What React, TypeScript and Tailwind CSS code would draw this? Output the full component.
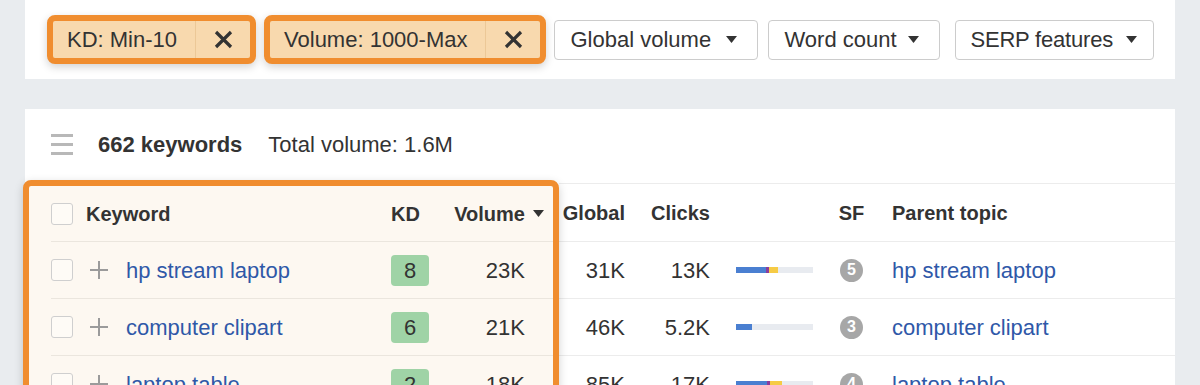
type Row = {
  keyword: string
  kd: number
  volume: string
  global: string
  clicks: string
  bar: [number, number, number]
  sf: number
  parent: string
}

const rows: Row[] = [
  { keyword: 'hp stream laptop', kd: 8, volume: '23K', global: '31K', clicks: '13K', bar: [30, 3, 9], sf: 5, parent: 'hp stream laptop' },
  { keyword: 'computer clipart', kd: 6, volume: '21K', global: '46K', clicks: '5.2K', bar: [16, 0, 0], sf: 3, parent: 'computer clipart' },
  { keyword: 'laptop table', kd: 2, volume: '18K', global: '85K', clicks: '17K', bar: [31, 3, 12], sf: 4, parent: 'laptop table' },
]

function Caret() {
  return (
    <svg width="11" height="7" viewBox="0 0 11 7" className="shrink-0">
      <polygon points="0,0 11,0 5.5,7" fill="#333" />
    </svg>
  )
}

function CloseIcon() {
  return (
    <svg width="19" height="19" viewBox="0 0 19 19">
      <path d="M2 2 L17 17 M17 2 L2 17" stroke="#333" strokeWidth="3.2" strokeLinecap="butt" />
    </svg>
  )
}

function PlusIcon() {
  return (
    <svg width="18" height="18" viewBox="0 0 18 18">
      <path d="M9 0 V18 M0 9 H18" stroke="#9b9b9b" strokeWidth="2" />
    </svg>
  )
}

function Checkbox() {
  return <div className="h-[22px] w-[22px] shrink-0 rounded-[3px] border border-[#cfcfcf] bg-white/40" />
}

function FilterChip({ label }: { label: string }) {
  return (
    <div className="flex h-[49px] items-stretch rounded-[8px] border-[6px] border-[#f08d2f] bg-[#f8d9ae] shadow-[0_3px_8px_rgba(0,0,0,0.18)]">
      <div className="flex items-center pl-[14px] pr-[18px] text-[22px]">{label}</div>
      <div className="flex w-[55px] items-center justify-center border-l border-[#ecc897]">
        <CloseIcon />
      </div>
    </div>
  )
}

function Dropdown({ label, className }: { label: string; className: string }) {
  return (
    <div className={`flex h-[40px] items-center justify-between rounded-[4px] border border-[#cccccc] bg-white text-[22px] ${className}`}>
      <span className="whitespace-nowrap">{label}</span>
      <Caret />
    </div>
  )
}

export default function App() {
  return (
    <div className="h-[385px] overflow-hidden bg-[#e9ecef] font-['Liberation_Sans',Arial,sans-serif] text-[#333]">
      <div className="ml-[25px] flex h-[79px] w-[1150px] items-center bg-white pl-[22px]">
        <FilterChip label="KD: Min-10" />
        <div className="ml-[8px]">
          <FilterChip label="Volume: 1000-Max" />
        </div>
        <div className="ml-[8px] flex gap-[10px]">
          <Dropdown label="Global volume" className="w-[204px] pl-[15px] pr-[20px]" />
          <Dropdown label="Word count" className="w-[172px] pl-[15px] pr-[20px]" />
          <div className="ml-[5px]">
            <Dropdown label="SERP features" className="w-[199px] pl-[14px] pr-[16px] tracking-[-0.2px]" />
          </div>
        </div>
      </div>

      <div className="ml-[25px] mt-[30px] w-[1150px] bg-white">
        <div className="flex h-[71px] items-center pl-[26px] text-[22px]">
          <div className="flex w-[22px] flex-col gap-[6px]">
            <div className="h-[3px] bg-[#b8b8b8]" />
            <div className="h-[3px] bg-[#b8b8b8]" />
            <div className="h-[3px] bg-[#b8b8b8]" />
          </div>
          <span className="ml-[25px] font-bold">662 keywords</span>
          <span className="ml-[26px]">Total volume: 1.6M</span>
        </div>

        <div className="flex">
          <div className="relative z-10 -ml-[2px] w-[536px] shrink-0 rounded-[8px] border-[6px] border-[#f08d2f] bg-[#fdf8f1] shadow-[0_3px_10px_rgba(0,0,0,0.18)]">
            <div className="flex h-[55px] items-center pl-[22px] text-[20px] font-bold">
              <Checkbox />
              <span className="ml-[13px] flex-1">Keyword</span>
              <span className="w-[62px]">KD</span>
              <div className="flex w-[91px] items-center">
                <span className="w-[72px] text-right">Volume</span>
                <span className="ml-[8px]">
                  <Caret />
                </span>
              </div>
              <div className="w-[9px]" />
            </div>
            {rows.map((r) => (
              <div key={r.keyword} className="ml-[22px] flex h-[57px] items-center border-t border-[#ebe6de] text-[22px]">
                <Checkbox />
                <span className="ml-[17px] flex">
                  <PlusIcon />
                </span>
                <span className="ml-[18px] flex-1 text-[#2f58a8]">{r.keyword}</span>
                <div className="w-[62px]">
                  <div className="flex h-[31px] w-[38px] items-center justify-center rounded-[4px] bg-[#9fd3a6]">{r.kd}</div>
                </div>
                <span className="w-[72px] text-right">{r.volume}</span>
                <div className="w-[28px]" />
              </div>
            ))}
          </div>

          <div className="mt-[3px] flex-1">
            <div className="flex h-[58px] items-center border-t border-[#ececec] text-[20px] font-bold">
              <span className="w-[66px] text-right">Global</span>
              <span className="w-[85px] text-right">Clicks</span>
              <div className="ml-[26px] w-[77px]" />
              <span className="ml-[25px] w-[27px] text-center">SF</span>
              <span className="ml-[27px]">Parent topic</span>
            </div>
            {rows.map((r) => (
              <div key={r.keyword} className="flex h-[57px] items-center border-t border-[#ececec] text-[22px]">
                <span className="w-[66px] text-right">{r.global}</span>
                <span className="w-[85px] text-right">{r.clicks}</span>
                <div className="ml-[26px] flex h-[6px] w-[77px] bg-[#e8ebf0]">
                  <div className="bg-[#4a7fd1]" style={{ width: r.bar[0] }} />
                  <div className="bg-[#8b3c9c]" style={{ width: r.bar[1] }} />
                  <div className="bg-[#f6cb45]" style={{ width: r.bar[2] }} />
                </div>
                <div className="ml-[25px] flex w-[27px] justify-center">
                  <div className="flex h-[23px] w-[23px] items-center justify-center rounded-full bg-[#a7a7a7] text-[16px] font-bold text-white">
                    {r.sf}
                  </div>
                </div>
                <span className="ml-[27px] text-[#2f58a8]">{r.parent}</span>
              </div>
            ))}
          </div>
        </div>
      </div>
    </div>
  )
}
